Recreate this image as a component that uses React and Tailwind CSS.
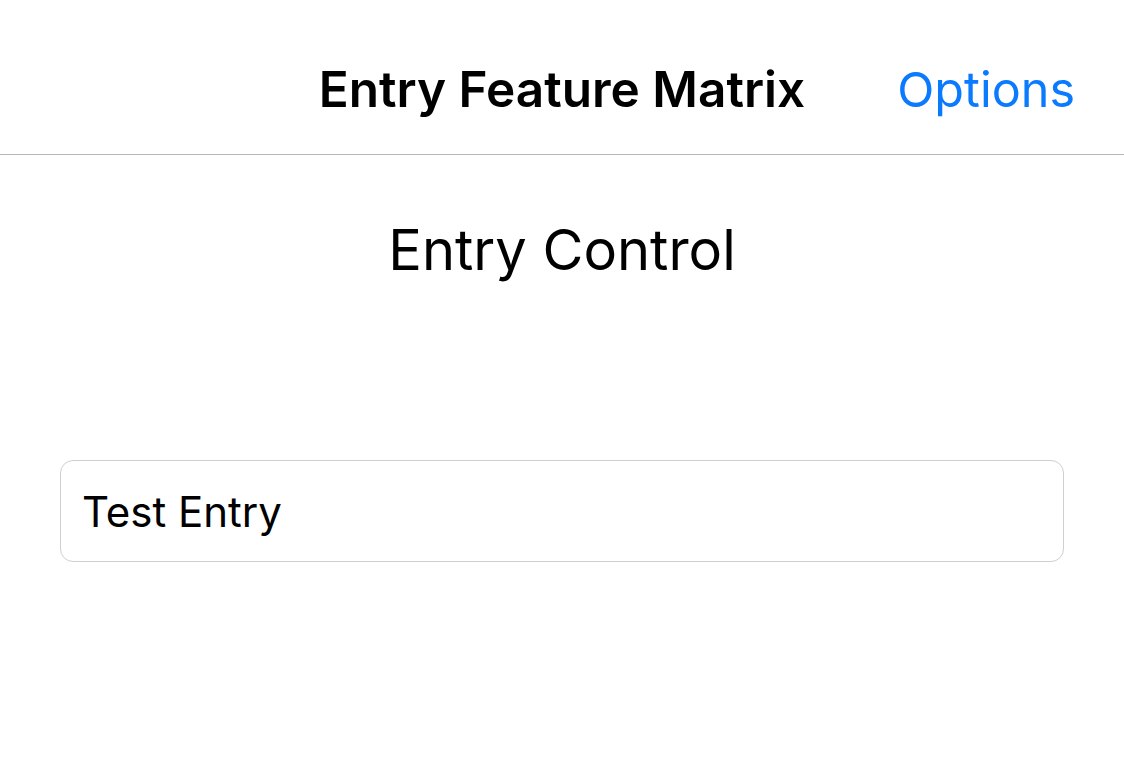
import React from 'react';

const App = () => {
  return (
    <div className="w-[1124px] h-[776px] bg-white overflow-hidden font-['Inter',sans-serif] text-black">
      <div className="h-[155px] border-b border-[#b8b8bc] flex items-end pb-[40px] relative">
        <div className="flex-1 text-center font-semibold text-[49.5px] leading-none">
          Entry Feature Matrix
        </div>
        <div className="absolute right-[49px] bottom-[40px] text-[#0a7aff] text-[48.5px] leading-none">
          Options
        </div>
      </div>
      <div className="flex flex-col items-center pt-[67px]">
        <h1 className="text-[56px] leading-none">Entry Control</h1>
      </div>
      <div className="px-[60px] pt-[182px]">
        <div className="h-[102px] border border-[#cfcfd3] rounded-[13px] flex items-center px-[21px]">
          <input
            className="w-full outline-none text-[42px] bg-transparent"
            defaultValue="Test Entry"
          />
        </div>
      </div>
    </div>
  );
};

export default App;
